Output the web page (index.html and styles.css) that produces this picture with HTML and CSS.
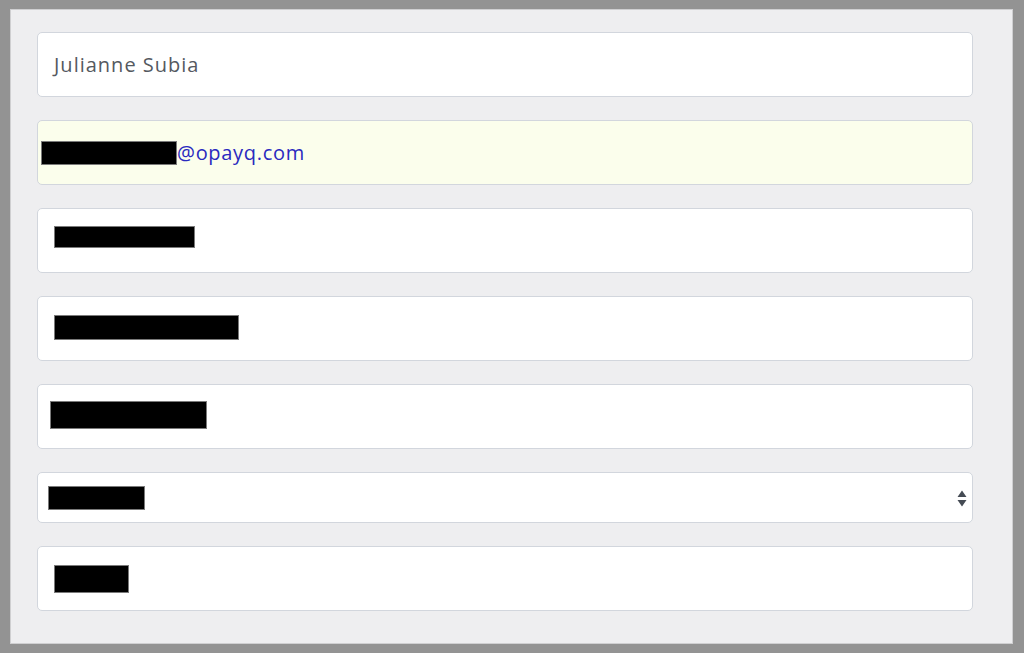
FILE: index.html
```html
<!DOCTYPE html>
<html>
<head>
<meta charset="utf-8">
<link rel="stylesheet" href="styles.css">
</head>
<body>
<div class="frame">
  <div class="panel">
    <div class="field"><span class="value">Julianne Subia</span></div>
    <div class="field autofill"><span class="redact r-email"></span><span class="email">@opayq.com</span></div>
    <div class="field"><span class="redact r3"></span></div>
    <div class="field"><span class="redact r4"></span></div>
    <div class="field"><span class="redact r5"></span></div>
    <div class="field select">
      <span class="redact r6"></span>
      <svg class="arrows" width="10" height="20" viewBox="0 0 10 20"><path d="M0.5 9 L5 2.5 L9.5 9 Z M0.5 12 L9.5 12 L5 18.5 Z" fill="#454b54"/></svg>
    </div>
    <div class="field"><span class="redact r7"></span></div>
  </div>
</div>
</body>
</html>
```

FILE: styles.css
```css
html, body {
  margin: 0;
  padding: 0;
  background: #ffffff;
}
.frame {
  box-sizing: border-box;
  width: 1024px;
  height: 653px;
  border-style: solid;
  border-color: #939393;
  border-width: 9px 11px 9px 10px;
}
.panel {
  box-sizing: border-box;
  height: 100%;
  background: #eeeef0;
  border: 1px solid #cfcfd1;
  padding: 22px 39px 0 26px;
  display: flex;
  flex-direction: column;
  gap: 23px;
}
.field {
  box-sizing: border-box;
  height: 65px;
  background: #ffffff;
  border: 1px solid #d2d6dd;
  border-radius: 5px;
  display: flex;
  align-items: center;
  padding-left: 16px;
  font-family: "Open Sans", "Liberation Sans", sans-serif;
  font-size: 20px;
  color: #55595f;
}
.field.autofill {
  background: #fbfeec;
  padding-left: 3px;
}
.field.select {
  height: 51px;
  padding-left: 10px;
  justify-content: space-between;
  padding-right: 5px;
}
.value {
  letter-spacing: 1px;
  margin-top: -1px;
}
.email {
  color: #2a2abf;
  letter-spacing: 0.7px;
}
.redact {
  display: inline-block;
  background: #000000;
  box-shadow: 0 0 0 1px #7a7a7a inset;
}
.r-email { width: 136px; height: 24px; }
.r3 { width: 141px; height: 22px; margin-top: -7px; }
.r4 { width: 185px; height: 25px; margin-top: -3px; }
.r5 { width: 157px; height: 28px; margin-left: -4px; margin-top: -3px; }
.r6 { width: 97px; height: 24px; }
.r7 { width: 75px; height: 28px; margin-left: 0; }
.arrows {
  display: block;
}
```
